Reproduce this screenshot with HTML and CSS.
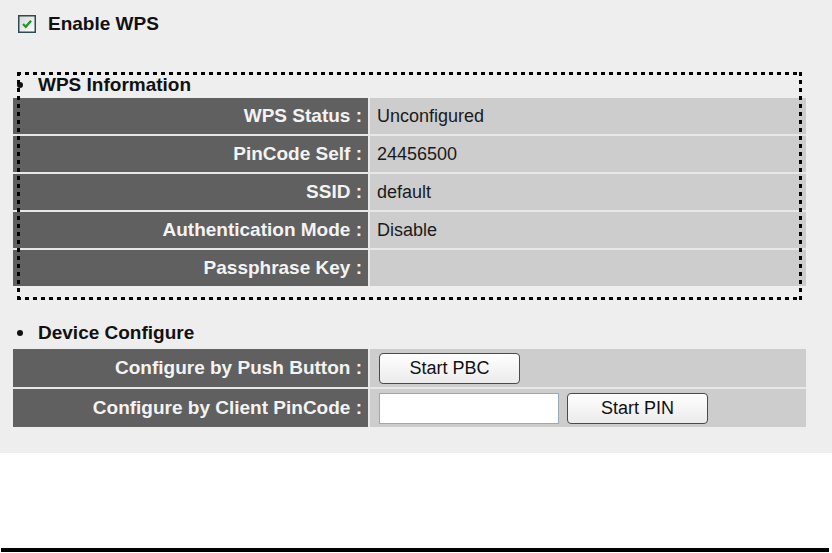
FILE: index.html
```html
<!DOCTYPE html>
<html lang="en">
<head>
    <meta charset="UTF-8">
    <title>WPS</title>
    <link rel="stylesheet" href="styles.css">
</head>
<body>
    <div class="panel">
        <label class="enable">
            <span class="check">
                <svg width="18" height="18" viewBox="0 0 18 18">
                    <defs>
                        <linearGradient id="cb" x1="0" y1="0" x2="1" y2="1">
                            <stop offset="0" stop-color="#d6d6d6"/>
                            <stop offset="1" stop-color="#ffffff"/>
                        </linearGradient>
                    </defs>
                    <rect x="0.75" y="0.75" width="16.5" height="16.5" fill="url(#cb)" stroke="#2d4a55" stroke-width="1.5"/>
                    <path d="M5 9 L7.8 11.8 L13 5.8" fill="none" stroke="#1f9a2a" stroke-width="2.4"/>
                </svg>
            </span>
            Enable WPS
        </label>

        <div class="group wps-info">
            <h2 class="heading"><span class="dot"></span>WPS Information</h2>
            <div class="form">
                <div class="label">WPS Status :</div>
                <div class="value">Unconfigured</div>
                <div class="label">PinCode Self :</div>
                <div class="value">24456500</div>
                <div class="label">SSID :</div>
                <div class="value">default</div>
                <div class="label">Authentication Mode :</div>
                <div class="value">Disable</div>
                <div class="label">Passphrase Key :</div>
                <div class="value"></div>
            </div>
            <div class="focus-ring"></div>
        </div>

        <div class="group device">
            <h2 class="heading"><span class="dot"></span>Device Configure</h2>
            <div class="form tall">
                <div class="label">Configure by Push Button :</div>
                <div class="value controls">
                    <button class="btn">Start PBC</button>
                </div>
                <div class="label">Configure by Client PinCode :</div>
                <div class="value controls">
                    <input class="pin" type="text">
                    <button class="btn">Start PIN</button>
                </div>
            </div>
        </div>
    </div>
    <div class="rule"></div>
</body>
</html>
```

FILE: styles.css
```css
body {
    margin: 0;
    background: #ffffff;
    font-family: "Liberation Sans", Arial, sans-serif;
}

.panel {
    height: 453px;
    background: #eeeeee;
    padding: 13px 0 0 13px;
    box-sizing: border-box;
}

.enable {
    display: flex;
    align-items: center;
    height: 22px;
    margin-left: 5px;
    font-size: 19px;
    font-weight: bold;
    color: #111;
}

.check {
    width: 18px;
    height: 18px;
    margin-right: 12px;
}

.check svg {
    display: block;
}

.group {
    position: relative;
    width: 793px;
}

.wps-info {
    margin-top: 39px;
}

.device {
    margin-top: 36px;
}

.heading {
    display: flex;
    align-items: center;
    height: 22px;
    margin: 0;
    font-size: 19px;
    line-height: 22px;
    font-weight: bold;
    color: #111;
}

.dot {
    width: 6px;
    height: 6px;
    border-radius: 50%;
    background: #111;
    margin: 0 15px 0 4px;
}

.form {
    display: grid;
    grid-template-columns: 355px 1fr;
    grid-auto-rows: 36px;
    gap: 2px;
    margin-top: 2px;
    background: #e8e8e8;
}

.form.tall {
    grid-auto-rows: 38px;
    margin-top: 5px;
}

.label {
    display: flex;
    align-items: center;
    justify-content: flex-end;
    padding-right: 6px;
    background: #606060;
    color: #f3f3f3;
    font-size: 19px;
    font-weight: bold;
    white-space: nowrap;
}

.value {
    display: flex;
    align-items: center;
    padding-left: 7px;
    background: #cdcdcd;
    color: #1a1a1a;
    font-size: 18px;
}

.controls {
    padding-left: 9px;
    gap: 8px;
}

.btn {
    width: 141px;
    height: 31px;
    margin: 0;
    padding: 0;
    border: 1px solid #3f4c5a;
    border-radius: 4px;
    background: linear-gradient(#ffffff, #ebebeb);
    font-family: "Liberation Sans", Arial, sans-serif;
    font-size: 18px;
    color: #111;
}

.pin {
    width: 180px;
    height: 31px;
    margin: 0;
    padding: 0 4px;
    box-sizing: border-box;
    border: 1px solid #9aa8ba;
    background: #fff;
    font-size: 18px;
}

.focus-ring {
    position: absolute;
    left: 4px;
    top: -2px;
    width: 785px;
    height: 228px;
    pointer-events: none;
    background:
        repeating-linear-gradient(90deg, #000 0 4px, transparent 4px 8px) top left / 100% 3px no-repeat,
        repeating-linear-gradient(90deg, #000 0 4px, transparent 4px 8px) bottom left / 100% 3px no-repeat,
        repeating-linear-gradient(180deg, #000 0 4px, transparent 4px 8px) top left / 3px 100% no-repeat,
        repeating-linear-gradient(180deg, #000 0 4px, transparent 4px 8px) top right / 3px 100% no-repeat;
}

.rule {
    height: 4px;
    margin: 95px 3px 0 1px;
    background: #000;
}
```
